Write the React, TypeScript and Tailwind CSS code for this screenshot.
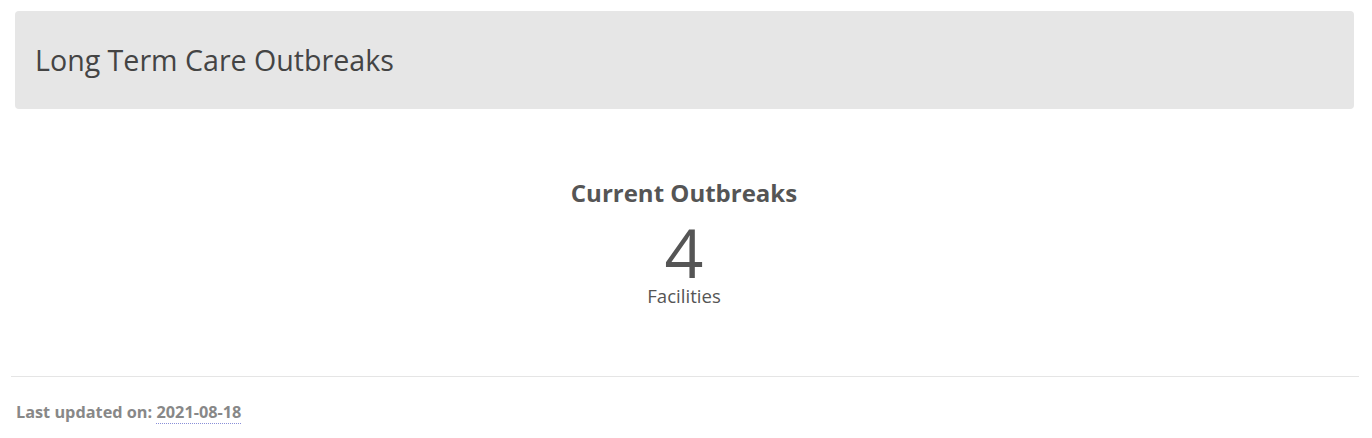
import React from "react";

export default function App() {
  return (
    <div className="w-[1372px] h-[438px] bg-white" style={{ fontFamily: '"Open Sans", sans-serif' }}>
      <div className="pt-[11px] pl-[15px] pr-[18px]">
        <div className="h-[98px] rounded-[4px] bg-[#e6e6e6] flex items-center pl-[20px]">
          <h1 className="text-[28.6px] leading-none text-[#444] font-normal">Long Term Care Outbreaks</h1>
        </div>
      </div>
      <div className="h-[267px] flex flex-col items-center pt-[70px] pr-[4px]">
        <div className="text-[24px] font-bold leading-[28px] text-[#555]">Current Outbreaks</div>
        <div className="text-[68px] leading-[56px] text-[#555] mt-[17px]">4</div>
        <div className="text-[18.6px] leading-[22px] text-[#555] mt-[5px]">Facilities</div>
      </div>
      <div className="ml-[11px] mr-[13px] border-t border-[#e5e5e5]"></div>
      <div className="pl-[16px] pt-[24px] text-[16.3px] font-bold text-[#888] leading-[22px]">
        Last updated on:{" "}
        <span className="border-b border-dotted border-[#8a8fd8]">2021-08-18</span>
      </div>
    </div>
  );
}
